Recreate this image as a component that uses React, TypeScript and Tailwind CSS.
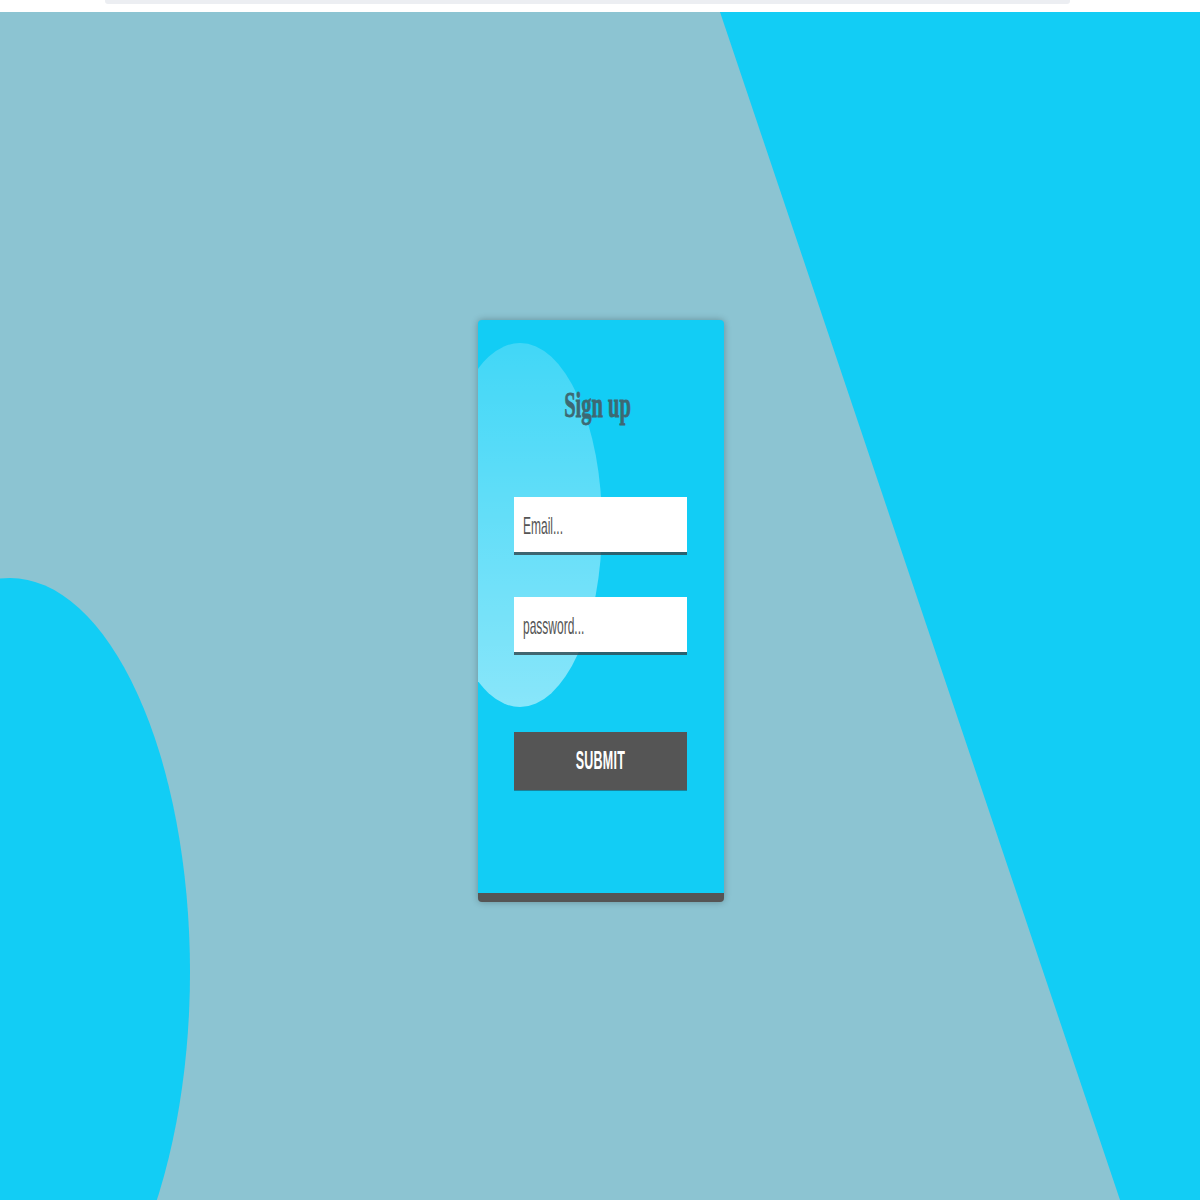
import React from "react";

export default function App() {
  return (
    <div className="w-full min-h-[1200px] bg-white" style={{ fontFamily: '"Liberation Sans", Arial, sans-serif' }}>
      <div className="h-[12px] bg-white flex">
        <div className="ml-[105px] w-[965px] h-[4px] bg-[#eceef2] rounded-b-[3px]" />
      </div>
      <main className="relative h-[1188px] overflow-hidden bg-[#8cc4d2]">
        <svg className="absolute inset-0 w-full h-full" viewBox="0 0 1200 1188" preserveAspectRatio="none">
          <polygon points="720,0 1200,0 1200,1188 1120,1188" fill="#12cdf5" />
          <ellipse cx="10" cy="960" rx="180" ry="394" fill="#12cdf5" />
        </svg>
        <div className="relative flex justify-center pt-[308px] pl-[1px]">
          <form
            className="relative w-[246px] h-[582px] overflow-hidden rounded-[4px] bg-[#12cdf5] border-b-[9px] border-[#555555] shadow-[0_0_7px_rgba(0,0,0,0.28)] flex flex-col items-center"
            onSubmit={(e) => e.preventDefault()}
          >
            <div className="absolute left-[-40px] top-[23px] w-[164px] h-[364px] rounded-[50%] bg-gradient-to-b from-white/20 to-white/50" />
            <h1
              className="relative mt-[67px] -ml-[5px] h-[36px] text-[36px] leading-none font-bold text-[#3d6973] scale-x-[0.57] whitespace-nowrap [-webkit-text-stroke:0.8px_#3d6973]"
              style={{ fontFamily: '"Liberation Serif", "Times New Roman", serif' }}
            >
              Sign up
            </h1>
            <div className="relative mt-[74px] w-[173px] h-[55px]">
              <input
                type="email"
                placeholder="Email..."
                className="absolute left-0 top-0 w-[346px] h-[55px] origin-left scale-x-50 bg-white pl-[18px] pt-[3px] text-[24px] text-[#444] placeholder:text-[#555] outline-none shadow-[0_3px_0_rgba(50,70,78,0.8)]"
              />
            </div>
            <div className="relative mt-[45px] w-[173px] h-[55px]">
              <input
                type="password"
                placeholder="password..."
                className="absolute left-0 top-0 w-[346px] h-[55px] origin-left scale-x-50 bg-white pl-[18px] pt-[3px] text-[24px] text-[#444] placeholder:text-[#555] outline-none shadow-[0_3px_0_rgba(50,70,78,0.8)]"
              />
            </div>
            <button
              type="submit"
              className="relative mt-[80px] w-[173px] h-[58px] bg-[#555555] flex items-center justify-center shadow-[0_1px_0_rgba(30,60,70,0.5)]"
            >
              <span className="inline-block scale-x-50 text-[25px] font-bold text-white tracking-[0.5px] whitespace-nowrap">
                SUBMIT
              </span>
            </button>
          </form>
        </div>
      </main>
    </div>
  );
}
